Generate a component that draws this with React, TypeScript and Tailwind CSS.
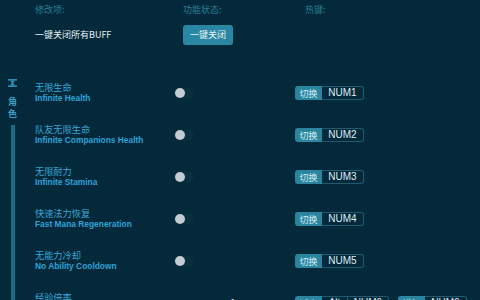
import React from "react";

const FONT = '"Noto Sans CJK SC", "Liberation Sans", sans-serif';

function Toggle() {
  return (
    <div className="relative w-[19px] h-[10px] rounded-full bg-[#08303f]">
      <div className="absolute left-0 top-0 w-[10px] h-[10px] rounded-full bg-[#c3cbd3]" />
    </div>
  );
}

function Key({ label, keys }: { label: string; keys: { t: string; w: string }[] }) {
  return (
    <div className="flex h-[14px] items-stretch">
      <div className="w-[27px] flex items-center justify-center bg-[#2a86a0] rounded-l-[3px] text-[9px] text-[#d6ecf3] leading-none">
        {label}
      </div>
      <div className="flex border border-l-0 border-[#1e5a70] rounded-r-[3px]">
        {keys.map((k, i) => (
          <div
            key={i}
            className={`${k.w} flex items-center justify-center text-[10px] text-[#dfeef4] leading-none ${i > 0 ? "border-l border-[#1e5a70]" : ""}`}
            style={{ fontFamily: '"Liberation Sans", "Noto Sans CJK SC", sans-serif' }}
          >
            {k.t}
          </div>
        ))}
      </div>
    </div>
  );
}

const rows = [
  { cn: "无限生命", en: "Infinite Health", key: "NUM1" },
  { cn: "队友无限生命", en: "Infinite Companions Health", key: "NUM2" },
  { cn: "无限耐力", en: "Infinite Stamina", key: "NUM3" },
  { cn: "快速法力恢复", en: "Fast Mana Regeneration", key: "NUM4" },
  { cn: "无能力冷却", en: "No Ability Cooldown", key: "NUM5" },
];

export default function App() {
  return (
    <div
      className="w-[480px] h-[300px] overflow-hidden bg-[#04293a] relative"
      style={{ fontFamily: FONT }}
    >
      {/* header */}
      <div className="flex h-[20px] items-center text-[9px] text-[#2b7d98]">
        <div className="ml-[35px] w-[148px]">修改项:</div>
        <div className="w-[122px]">功能状态:</div>
        <div>热键:</div>
      </div>

      {/* buff row */}
      <div className="flex h-[20px] mt-[5px] items-center">
        <div className="ml-[35px] w-[148px] text-[9px] text-[#e4eef2]">一键关闭所有BUFF</div>
        <div className="w-[50px] h-[20px] rounded-[3px] bg-[#2a87a3] flex items-center justify-center text-[9px] text-[#e8f4f8]">
          一键关闭
        </div>
      </div>

      {/* main */}
      <div className="flex mt-[27px]">
        <div className="w-[35px] shrink-0">
          <div className="w-[25px] flex flex-col items-center">
            <svg width="9" height="8" viewBox="0 0 9 8" className="mt-[7px]">
              <rect x="0" y="0" width="9" height="1.6" fill="#2f8fb3" />
              <rect x="0" y="6.4" width="9" height="1.6" fill="#2f8fb3" />
              <path d="M2 1.6 L7 1.6 L5.2 4 L7 6.4 L2 6.4 L3.8 4 Z" fill="#2f8fb3" />
            </svg>
            <div className="mt-[9px] h-[12px] flex items-center text-[9px] leading-[12px] font-bold text-[#3a9cc4]">角</div>
            <div className="h-[12px] flex items-center text-[9px] leading-[12px] font-bold text-[#3a9cc4]">色</div>
            <div className="mt-[5px] w-[4px] h-[200px] bg-[#176a88]" />
          </div>
        </div>

        <div className="flex flex-col">
          {rows.map((r) => (
            <div key={r.key} className="flex h-[42px] items-center">
              <div className="w-[140px]">
                <div className="text-[9.2px] leading-[11px] text-[#3aa6d6]">{r.cn}</div>
                <div
                  className="text-[8.4px] leading-[11px] font-bold text-[#2fa2d8]"
                  style={{ fontFamily: '"Liberation Sans", sans-serif' }}
                >
                  {r.en}
                </div>
              </div>
              <div className="w-[120px]">
                <Toggle />
              </div>
              <Key label="切换" keys={[{ t: r.key, w: "w-[41px]" }]} />
            </div>
          ))}
          <div className="flex h-[42px] items-center">
            <div className="w-[140px]">
              <div className="text-[9.2px] leading-[11px] text-[#3aa6d6]">经验倍率</div>
              <div className="text-[8.4px] leading-[11px] font-bold text-[#2fa2d8]" style={{ fontFamily: '"Liberation Sans", sans-serif' }}>
                Experience Multiplier
              </div>
            </div>
            <div className="w-[120px] pl-[55px] text-[10px] text-[#e4eef2]" style={{ fontFamily: '"Liberation Sans", sans-serif' }}>
              1
            </div>
            <div className="flex gap-[9px]">
              <Key label="减少" keys={[{ t: "Alt", w: "w-[25px]" }, { t: "NUM6", w: "w-[41px]" }]} />
              <Key label="增加" keys={[{ t: "NUM6", w: "w-[41px]" }]} />
            </div>
          </div>
        </div>
      </div>
    </div>
  );
}
